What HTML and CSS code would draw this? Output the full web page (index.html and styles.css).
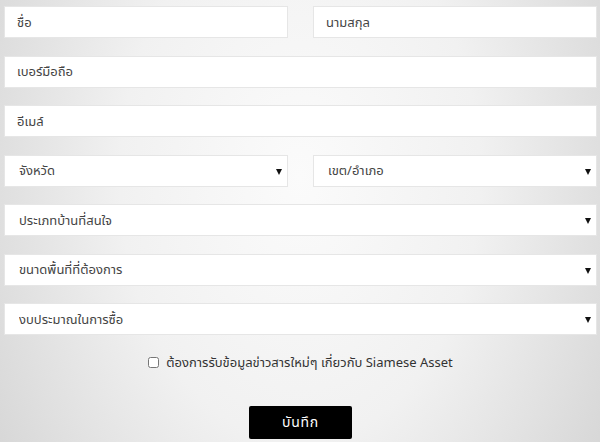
FILE: index.html
```html
<!DOCTYPE html>
<html lang="th">

<head>
    <meta charset="UTF-8">
    <meta name="viewport" content="width=device-width, initial-scale=1.0">
    <title>ลงทะเบียน</title>
    <link rel="stylesheet" href="styles.css">
</head>

<body>
    <form class="register-form">
        <div class="row two">
            <input class="field" type="text" placeholder="ชื่อ">
            <input class="field" type="text" placeholder="นามสกุล">
        </div>
        <div class="row">
            <input class="field" type="tel" placeholder="เบอร์มือถือ">
        </div>
        <div class="row">
            <input class="field" type="email" placeholder="อีเมล์">
        </div>
        <div class="row two">
            <div class="select-wrap">
                <select class="field select">
                    <option>จังหวัด</option>
                </select>
            </div>
            <div class="select-wrap">
                <select class="field select">
                    <option>เขต/อำเภอ</option>
                </select>
            </div>
        </div>
        <div class="row">
            <div class="select-wrap">
                <select class="field select">
                    <option>ประเภทบ้านที่สนใจ</option>
                </select>
            </div>
        </div>
        <div class="row">
            <div class="select-wrap">
                <select class="field select">
                    <option>ขนาดพื้นที่ที่ต้องการ</option>
                </select>
            </div>
        </div>
        <div class="row">
            <div class="select-wrap">
                <select class="field select">
                    <option>งบประมาณในการซื้อ</option>
                </select>
            </div>
        </div>
        <label class="news-check">
            <input type="checkbox"> ต้องการรับข้อมูลข่าวสารใหม่ๆ เกี่ยวกับ Siamese Asset
        </label>
        <div class="actions">
            <button type="button" class="save-btn">บันทึก</button>
        </div>
    </form>
</body>

</html>
```

FILE: styles.css
```css
body {
    margin: 0;
    min-height: 442px;
    font-family: 'Noto Sans Thai', 'Noto Sans', 'DejaVu Sans', sans-serif;
    color: #333;
    background: radial-gradient(ellipse 60% 120% at 50% 40%, #fbfbfb 0%, #f1f1f1 50%, #d6d6d6 100%);
}

.register-form {
    padding: 6px 3px 0 4px;
}

.row {
    display: grid;
    grid-template-columns: 1fr;
    margin-bottom: 17.5px;
}

.row.two {
    grid-template-columns: 1fr 1fr;
    column-gap: 25px;
}

.field {
    box-sizing: border-box;
    width: 100%;
    height: 32px;
    margin: 0;
    padding: 1px 12px 0;
    border: 1px solid #e6e6e6;
    border-radius: 0;
    background: #fff;
    font-family: inherit;
    font-size: 13px;
    color: #444;
    outline: none;
}

.field::placeholder {
    color: #444;
}

.select-wrap {
    position: relative;
}

.select {
    -webkit-appearance: none;
    appearance: none;
    padding-left: 14px;
}

.select-wrap::after {
    content: '';
    position: absolute;
    right: 6px;
    top: 14px;
    border-left: 3px solid transparent;
    border-right: 3px solid transparent;
    border-top: 6px solid #111;
    pointer-events: none;
}

.news-check {
    display: flex;
    align-items: center;
    justify-content: center;
    gap: 7px;
    margin-top: 9px;
    font-size: 13px;
    color: #333;
}

.news-check input {
    width: 11px;
    height: 11px;
    margin: 0;
}

.actions {
    display: flex;
    justify-content: center;
    margin-top: 33px;
}

.save-btn {
    width: 103px;
    height: 33px;
    border: none;
    border-radius: 2px;
    background: #000;
    color: #fff;
    font-family: inherit;
    font-size: 14px;
    letter-spacing: 0.05em;
    cursor: pointer;
}
```
